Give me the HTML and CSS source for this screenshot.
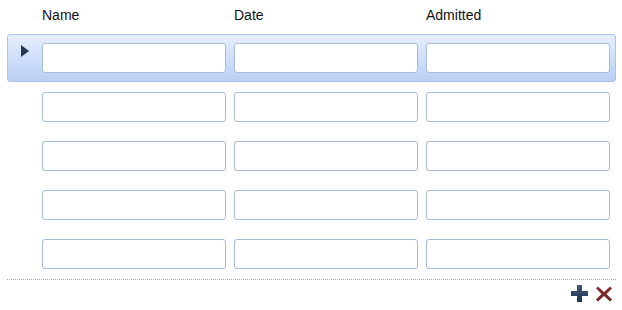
FILE: index.html
```html
<!DOCTYPE html>
<html lang="en">
<head>
    <meta charset="UTF-8">
    <title>Patients</title>
    <link rel="stylesheet" href="styles.css">
</head>
<body>
    <div class="grid">
        <div class="header">
            <span>Name</span>
            <span>Date</span>
            <span>Admitted</span>
        </div>

        <div class="row selected">
            <span class="marker"></span>
            <input type="text">
            <input type="text">
            <input type="text">
        </div>
        <div class="row">
            <input type="text">
            <input type="text">
            <input type="text">
        </div>
        <div class="row">
            <input type="text">
            <input type="text">
            <input type="text">
        </div>
        <div class="row">
            <input type="text">
            <input type="text">
            <input type="text">
        </div>
        <div class="row">
            <input type="text">
            <input type="text">
            <input type="text">
        </div>

        <div class="footer">
            <button class="tool" title="Add row">
                <svg width="17" height="17" viewBox="0 0 17 17">
                    <defs>
                        <linearGradient id="blue" x1="0" y1="0" x2="0" y2="1">
                            <stop offset="0" stop-color="#41597a"/>
                            <stop offset="1" stop-color="#233650"/>
                        </linearGradient>
                    </defs>
                    <path d="M6 0h5v6h6v5h-6v6h-5v-6h-6v-5h6z" fill="url(#blue)"/>
                </svg>
            </button>
            <button class="tool" title="Delete row">
                <svg width="16" height="16" viewBox="0 0 16 16">
                    <defs>
                        <linearGradient id="red" x1="0" y1="0" x2="0" y2="1">
                            <stop offset="0" stop-color="#8e3434"/>
                            <stop offset="1" stop-color="#6a2222"/>
                        </linearGradient>
                    </defs>
                    <path d="M2 0.5l6 5.5 6-5.5 2 2-5.5 5.5 5.5 5.5-2 2-6-5.5-6 5.5-2-2 5.5-5.5-5.5-5.5z" fill="url(#red)"/>
                </svg>
            </button>
        </div>
    </div>
</body>
</html>
```

FILE: styles.css
```css
body {
    margin: 0;
    font-family: "Liberation Sans", Arial, sans-serif;
    font-size: 14px;
    color: #111;
    background-color: white;
}
.grid {
    width: 622px;
}
.header {
    display: grid;
    grid-template-columns: 184px 184px 184px;
    column-gap: 8px;
    padding: 7px 0 0 42px;
    height: 27px;
}
.row {
    position: relative;
    display: flex;
    gap: 8px;
    margin: 0 6px 1px 7px;
    padding: 8px 5px 8px 34px;
    border: 1px solid transparent;
    border-radius: 3px;
}
.row.selected {
    background: linear-gradient(#e5eefc, #b8d0f5);
    border-color: #a9c5ef;
}
.marker {
    position: absolute;
    left: 13px;
    top: 10px;
    width: 0;
    height: 0;
    border-top: 6px solid transparent;
    border-bottom: 6px solid transparent;
    border-left: 8px solid #26364d;
}
input {
    box-sizing: border-box;
    width: 184px;
    height: 30px;
    margin: 0;
    padding: 4px 6px;
    border: 1px solid #a6bcd9;
    border-radius: 3px;
    background-color: white;
    font-family: inherit;
    font-size: 13px;
}
.footer {
    display: flex;
    justify-content: flex-end;
    align-items: center;
    gap: 8px;
    margin: 0 6px 0 7px;
    padding: 5px 4px 0 0;
    border-top: 1px dotted #a0a9b8;
}
.tool {
    display: flex;
    padding: 0;
    border: none;
    background: none;
    cursor: pointer;
}
```
